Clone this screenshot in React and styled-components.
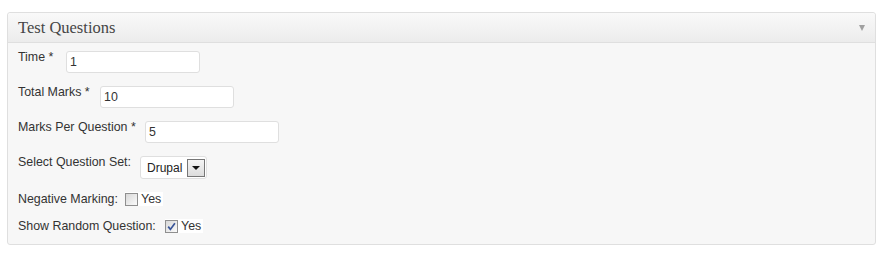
import styled, { createGlobalStyle } from 'styled-components';

const GlobalStyle = createGlobalStyle`
  body {
    margin: 0;
    background: #fff;
    font-family: 'Liberation Sans', Arial, sans-serif;
    color: #333;
  }
`;

const Page = styled.div`
  padding: 12px 17px 0 7px;
`;

const Panel = styled.div`
  border: 1px solid #dfdfdf;
  border-radius: 3px;
  background: #f7f7f7;
  box-shadow: 0 1px 0 #fff inset;
`;

const Header = styled.div`
  display: flex;
  align-items: center;
  justify-content: space-between;
  height: 29px;
  padding: 0 10px;
  border-bottom: 1px solid #dfdfdf;
  border-radius: 3px 3px 0 0;
  background: linear-gradient(to bottom, #f9f9f9, #ececec);
`;

const Title = styled.h3`
  margin: 0;
  font-family: 'Liberation Serif', 'Times New Roman', serif;
  font-size: 16.5px;
  font-weight: normal;
  color: #464646;
`;

const Toggle = styled.span`
  width: 0;
  height: 0;
  border-left: 3px solid transparent;
  border-right: 3px solid transparent;
  border-top: 6px solid #a0a0a0;
`;

const Body = styled.div`
  display: flex;
  flex-direction: column;
  padding: 7px 10px 10px;
`;

const Row = styled.div`
  display: flex;
  align-items: ${(p) => (p.$center ? 'center' : 'flex-start')};
  margin-bottom: ${(p) => p.$mb ?? 12}px;
  font-size: 12.4px;
  line-height: ${(p) => (p.$center ? '16px' : '14px')};
`;

const Label = styled.label`
  flex: none;
  width: ${(p) => p.$w}px;
  color: #333;
`;

const TextInput = styled.input`
  box-sizing: border-box;
  width: 134px;
  height: 22px;
  margin: 1px 0 0;
  padding: 0 3px;
  border: 1px solid #dfdfdf;
  border-radius: 3px;
  background: #fff;
  font-family: inherit;
  font-size: 12.4px;
  color: #333;
  outline: none;
`;

const SelectBox = styled.div`
  box-sizing: border-box;
  display: flex;
  align-items: center;
  justify-content: space-between;
  width: 67px;
  height: 23px;
  margin-top: 1px;
  padding: 0 1px 0 6px;
  border: 1px solid #dfdfdf;
  border-radius: 3px;
  background: #fff;
  font-size: 12px;
  color: #222;
`;

const SelectButton = styled.span`
  box-sizing: border-box;
  display: flex;
  align-items: center;
  justify-content: center;
  width: 18px;
  height: 18px;
  border: 1px solid #767676;
  background: linear-gradient(to bottom, #f4f4f4, #dcdcdc);

  &::after {
    content: '';
    border-left: 4px solid transparent;
    border-right: 4px solid transparent;
    border-top: 4px solid #111;
    margin-top: 1px;
  }
`;

const CheckLabel = styled.span`
  display: inline-flex;
  align-items: center;
  height: 14px;
  padding-right: 2px;
  background: #fff;
  color: #333;
`;

const Box = styled.span`
  box-sizing: border-box;
  display: inline-flex;
  align-items: center;
  justify-content: center;
  width: 13px;
  height: 13px;
  margin-right: 3px;
  border: 1px solid #8f8f8f;
  background: linear-gradient(135deg, #d8d8d8, #fbfbfb);
`;

const Checkbox = ({ checked }) => (
  <CheckLabel>
    <Box>
      {checked && (
        <svg width='9' height='9' viewBox='0 0 9 9'>
          <path
            d='M1.2 4.6 L3.4 7.4 L7.9 1.2'
            fill='none'
            stroke='#3a5699'
            strokeWidth='1.7'
          />
        </svg>
      )}
    </Box>
    Yes
  </CheckLabel>
);

const App = () => {
  return (
    <>
      <GlobalStyle />
      <Page>
        <Panel>
          <Header>
            <Title>Test Questions</Title>
            <Toggle />
          </Header>
          <Body>
            <Row>
              <Label $w={48}>Time *</Label>
              <TextInput defaultValue='1' />
            </Row>
            <Row>
              <Label $w={82}>Total Marks *</Label>
              <TextInput defaultValue='10' />
            </Row>
            <Row>
              <Label $w={127}>Marks Per Question *</Label>
              <TextInput defaultValue='5' />
            </Row>
            <Row>
              <Label $w={122}>Select Question Set:</Label>
              <SelectBox>
                Drupal
                <SelectButton />
              </SelectBox>
            </Row>
            <Row $center $mb={11}>
              <Label $w={107}>Negative Marking:</Label>
              <Checkbox />
            </Row>
            <Row $center $mb={0}>
              <Label $w={147}>Show Random Question:</Label>
              <Checkbox checked />
            </Row>
          </Body>
        </Panel>
      </Page>
    </>
  );
};

export default App;
